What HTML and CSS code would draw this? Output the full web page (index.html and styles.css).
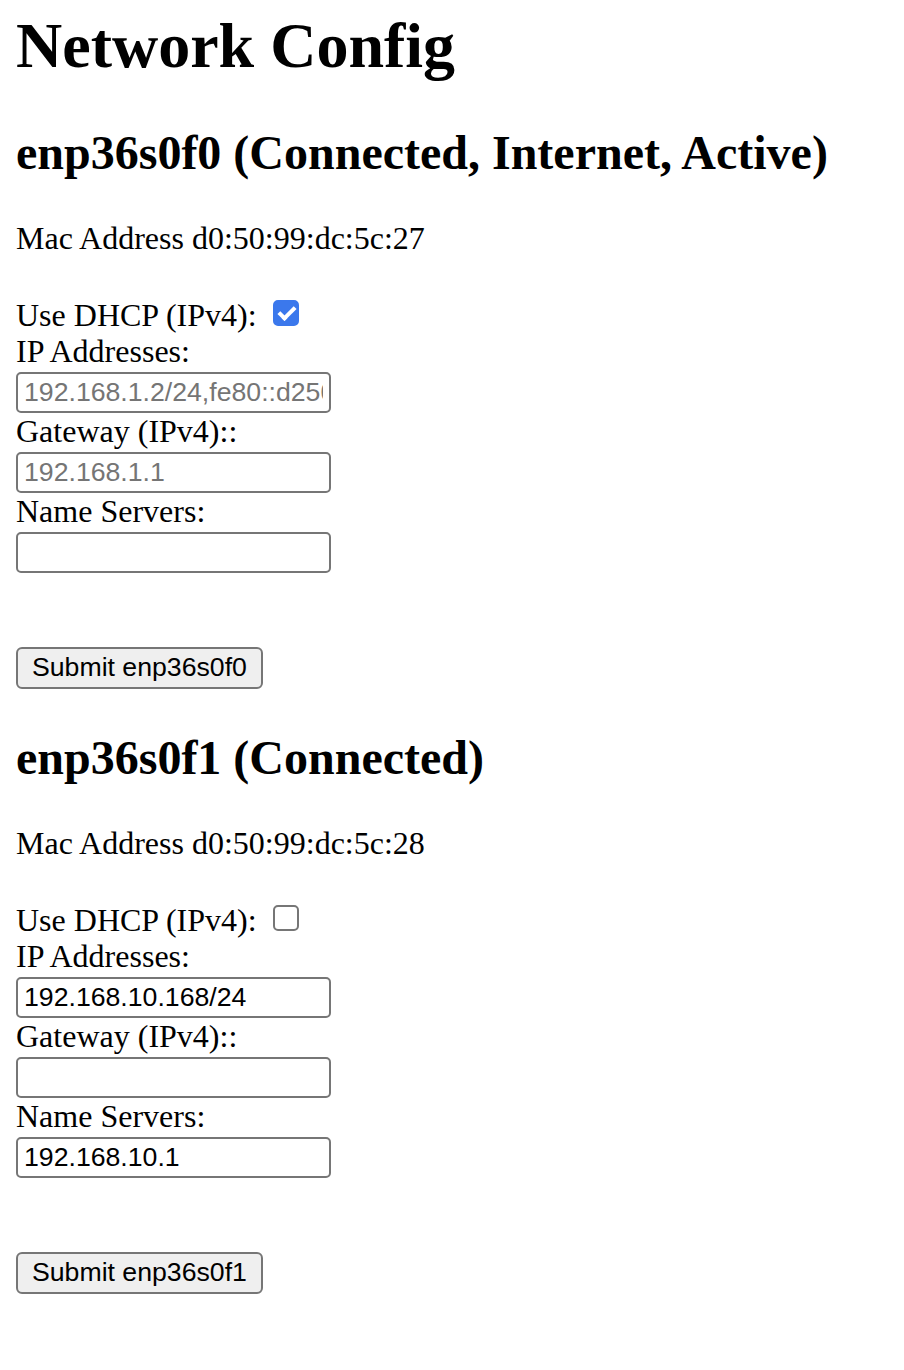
FILE: index.html
```html
<!DOCTYPE html>
<html lang="en">
<head>
<meta charset="utf-8">
<title>Network Config</title>
<link rel="stylesheet" href="styles.css">
</head>
<body>
<h1 class="page-title">Network Config</h1>

<section class="iface">
  <h2 class="iface-title">enp36s0f0 (Connected, Internet, Active)</h2>
  <p class="mac">Mac Address d0:50:99:dc:5c:27</p>
  <form class="iface-form">
    <div class="dhcp-row"><label for="dhcp0">Use DHCP (IPv4):</label> <input id="dhcp0" class="check" type="checkbox" checked></div>
    <label class="field-label" for="ip0">IP Addresses:</label>
    <input id="ip0" class="field" type="text" placeholder="192.168.1.2/24,fe80::d250:99ff:fedc:5c27/64" disabled>
    <label class="field-label" for="gw0">Gateway (IPv4)::</label>
    <input id="gw0" class="field" type="text" placeholder="192.168.1.1" disabled>
    <label class="field-label" for="ns0">Name Servers:</label>
    <input id="ns0" class="field" type="text">
    <button class="submit" type="button">Submit enp36s0f0</button>
  </form>
</section>

<section class="iface">
  <h2 class="iface-title">enp36s0f1 (Connected)</h2>
  <p class="mac">Mac Address d0:50:99:dc:5c:28</p>
  <form class="iface-form">
    <div class="dhcp-row"><label for="dhcp1">Use DHCP (IPv4):</label> <input id="dhcp1" class="check" type="checkbox"></div>
    <label class="field-label" for="ip1">IP Addresses:</label>
    <input id="ip1" class="field" type="text" value="192.168.10.168/24">
    <label class="field-label" for="gw1">Gateway (IPv4)::</label>
    <input id="gw1" class="field" type="text">
    <label class="field-label" for="ns1">Name Servers:</label>
    <input id="ns1" class="field" type="text" value="192.168.10.1">
    <button class="submit" type="button">Submit enp36s0f1</button>
  </form>
</section>
</body>
</html>
```

FILE: styles.css
```css
html {
  background: #ffffff;
}

body {
  margin: 0 16px;
  font-family: "Liberation Serif", "Times New Roman", serif;
  font-size: 32px;
  color: #000000;
}

.page-title {
  font-size: 64px;
  font-weight: bold;
  line-height: 73.5px;
  margin: 9px 0 42.9px;
}

.iface-title {
  font-size: 48px;
  font-weight: bold;
  line-height: 55.2px;
  margin: 41.8px 0 39.8px;
}

.mac {
  line-height: 36.8px;
  margin: 32px 0;
}

.iface-form {
  margin: 0;
}

.dhcp-row {
  line-height: 35px;
  padding-top: 9px;
}

.check {
  -webkit-appearance: none;
  appearance: none;
  position: relative;
  width: 26px;
  height: 26px;
  margin: 0 0 0 8px;
  box-sizing: border-box;
  border: 2px solid #767676;
  border-radius: 5px;
  background: #ffffff;
  vertical-align: baseline;
}

.check:checked {
  background: #3b78ec;
  border-color: #3b78ec;
}

.check:checked::after {
  content: "";
  position: absolute;
  left: 7px;
  top: 1px;
  width: 6px;
  height: 13px;
  border-right: 4px solid #ffffff;
  border-bottom: 4px solid #ffffff;
  transform: rotate(45deg);
}

.field-label {
  display: block;
  line-height: 36.8px;
}

.field {
  display: block;
  box-sizing: border-box;
  width: 315px;
  height: 41px;
  margin: 2px 0 0;
  padding: 0 6px;
  border: 2px solid #767676;
  border-radius: 5px;
  background: #ffffff;
  font-family: "Liberation Sans", Arial, sans-serif;
  font-size: 26.67px;
  color: #000000;
}

.field::placeholder {
  color: #757575;
  opacity: 1;
}

.field:disabled {
  background: #ffffff;
  color: #000000;
}

.submit {
  display: block;
  box-sizing: border-box;
  height: 42px;
  margin: 74px 0 0;
  padding: 0 14px;
  border: 2px solid #767676;
  border-radius: 6px;
  background: #efefef;
  font-family: "Liberation Sans", Arial, sans-serif;
  font-size: 26.67px;
  color: #000000;
}
```
